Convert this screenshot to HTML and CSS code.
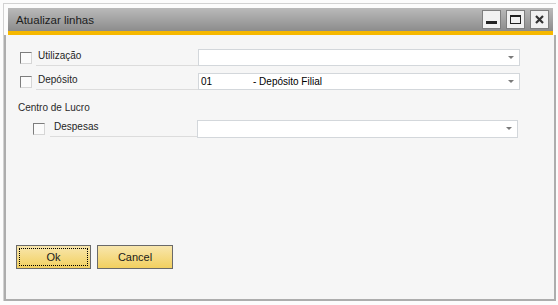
FILE: index.html
```html
<!DOCTYPE html>
<html lang="pt">
<head>
<meta charset="UTF-8">
<meta name="viewport" content="width=device-width, initial-scale=1.0">
<title>Atualizar linhas</title>
<link rel="stylesheet" href="styles.css">
</head>
<body>

<div class="window">
    <div class="titlebar">
        <span class="title">Atualizar linhas</span>
        <div class="title-buttons">
            <span class="tbtn"><svg width="17" height="17" viewBox="0 0 17 17"><rect x="3" y="10" width="11" height="3" fill="#222"/></svg></span>
            <span class="tbtn"><svg width="17" height="17" viewBox="0 0 17 17"><rect x="3.5" y="4.5" width="10" height="8" fill="none" stroke="#222"/><rect x="3" y="4" width="11" height="2" fill="#222"/></svg></span>
            <span class="tbtn"><svg width="17" height="17" viewBox="0 0 17 17"><path d="M5 5 L12 12 M12 5 L5 12" stroke="#333" stroke-width="2.2"/></svg></span>
        </div>
    </div>
    <div class="accent"></div>
    <div class="content">
        <div class="row">
            <span class="check"></span>
            <label class="field-label">Utilização</label>
            <div class="combo"><span class="arrow"></span></div>
        </div>
        <div class="row row-gap">
            <span class="check"></span>
            <label class="field-label">Depósito</label>
            <div class="combo"><span class="code">01</span><span class="value">- Depósito Filial</span><span class="arrow"></span></div>
        </div>
        <div class="group-title">Centro de Lucro</div>
        <div class="row row-sub">
            <span class="check"></span>
            <label class="field-label">Despesas</label>
            <div class="combo"><span class="arrow"></span></div>
        </div>

        <div class="footer">
            <button class="btn btn-focus"><span>Ok</span></button>
            <button class="btn"><span>Cancel</span></button>
        </div>
    </div>
</div>

</body>
</html>
```

FILE: styles.css
```css
body {
    margin: 0;
    padding: 0;
    background-color: #fcfcfc;
    font-family: "Liberation Sans", Arial, sans-serif;
    font-size: 10px;
    color: #1e1e1e;
}
.window {
    box-sizing: border-box;
    margin: 3px 0 0 3px;
    width: 553px;
    height: 298px;
    border-top: 1px solid #d2d2d2;
    border-left: 1px solid #d2d2d2;
    display: flex;
    flex-direction: column;
}
.titlebar {
    margin: 4px 3px 0 4px;
    height: 23px;
    background: linear-gradient(#bababa, #8c8c8c);
    display: flex;
    align-items: center;
    justify-content: space-between;
}
.title {
    padding-left: 8px;
    font-size: 11.5px;
    color: #1c1c1c;
}
.title-buttons {
    display: flex;
    gap: 5px;
    margin-right: 4px;
}
.tbtn {
    box-sizing: border-box;
    width: 19px;
    height: 19px;
    background-color: #f1f1f1;
    border: 1px solid #7e7e7e;
    display: flex;
}
.accent {
    margin: 0 3px 0 4px;
    height: 4px;
    background-color: #f6b800;
}
.content {
    flex: 1;
    background-color: #f6f6f6;
    border: 2px solid #adadad;
    border-top: none;
    display: flex;
    flex-direction: column;
    padding-top: 14px;
}
.row {
    display: flex;
    align-items: center;
    height: 17px;
    margin-left: 14px;
}
.row-gap {
    margin-top: 7px;
}
.row-sub {
    margin-left: 27px;
    margin-top: 6px;
}
.check {
    box-sizing: border-box;
    width: 12px;
    height: 12px;
    border: 1px solid;
    border-color: #7d7d7d #d6d6d6 #d6d6d6 #7d7d7d;
    background-color: #fbfbfb;
    margin-right: 4px;
}
.row-sub .check {
    margin-right: 5px;
}
.field-label {
    box-sizing: border-box;
    width: 162px;
    height: 17px;
    padding-left: 2px;
    line-height: 13px;
    border-bottom: 1px solid #dcdcdc;
}
.row-sub .field-label {
    width: 147px;
    padding-left: 4px;
}
.combo {
    box-sizing: border-box;
    position: relative;
    width: 322px;
    height: 17px;
    background-color: #fff;
    border: 1px solid #d3d7db;
    display: flex;
    align-items: center;
    padding-left: 2px;
    color: #000;
}
.row-sub .combo {
    width: 321px;
    height: 18px;
}
.code {
    width: 52px;
}
.arrow {
    position: absolute;
    right: 5px;
    top: 6px;
    width: 0;
    height: 0;
    border-left: 3px solid transparent;
    border-right: 3px solid transparent;
    border-top: 3px solid #7a7a7a;
}
.group-title {
    margin-top: 12px;
    padding-left: 12px;
    line-height: 12px;
    color: #2a2a2a;
}
.footer {
    margin-top: auto;
    padding: 0 0 30px 10px;
    display: flex;
    gap: 6px;
}
.btn {
    box-sizing: border-box;
    width: 75px;
    height: 24px;
    padding: 2px;
    border: 1px solid #6a6a6a;
    background: linear-gradient(#f8e6ad, #f2d05f);
    font-family: "Liberation Sans", Arial, sans-serif;
    font-size: 11px;
    color: #1a1a1a;
}
.btn + .btn {
    width: 76px;
}
.btn span {
    display: flex;
    align-items: center;
    justify-content: center;
    height: 100%;
    box-sizing: border-box;
    border: 1px dotted transparent;
}
.btn-focus span {
    border-color: #000;
}
```
